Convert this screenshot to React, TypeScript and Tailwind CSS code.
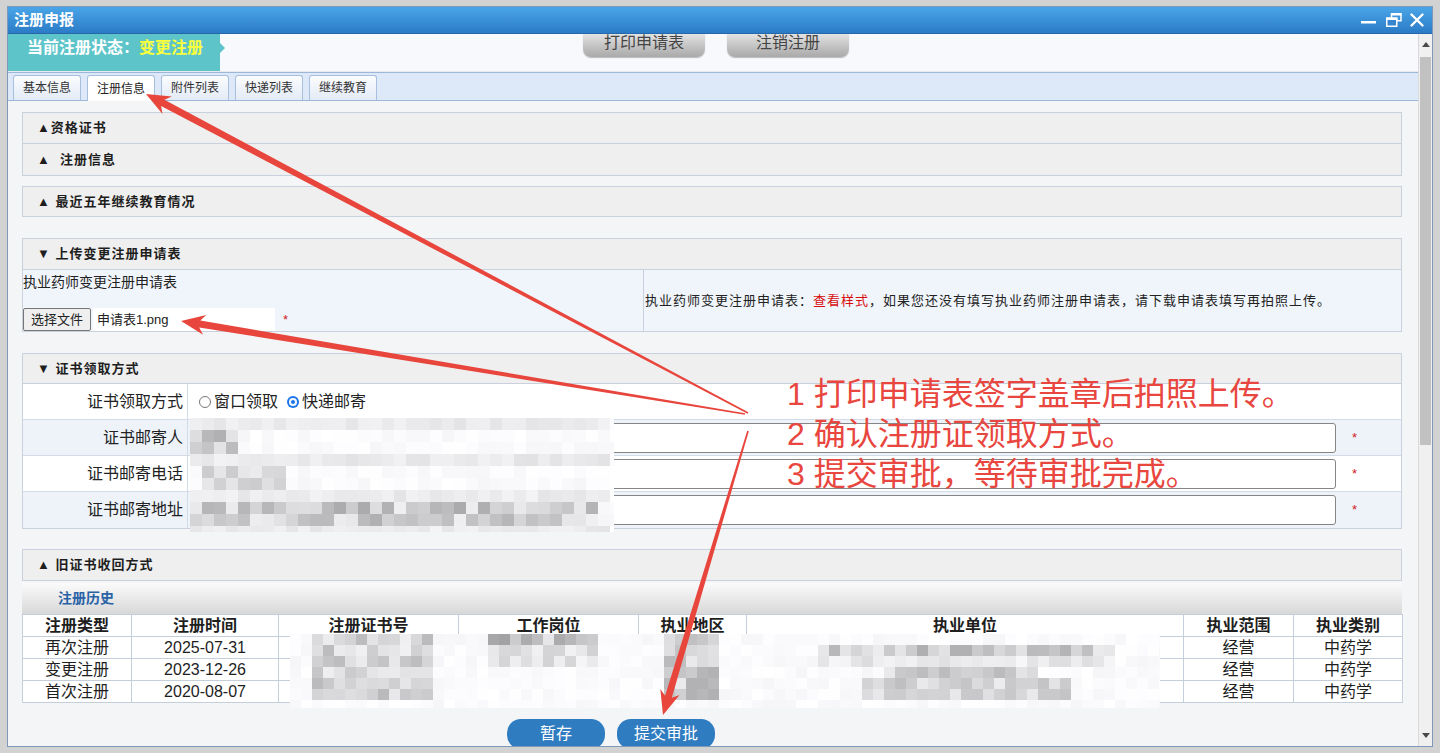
import React from "react";

type Ink = { x: number; y: number; w: number; h: number; g: number; r: number };

// 伪随机灰度，用来画打码块
const noise = (i: number, j: number, seed: number) => {
  const v = Math.sin(i * 12.9898 + j * 78.233 + seed * 4.1414) * 43758.5453;
  return v - Math.floor(v);
};

function Mosaic({
  width,
  height,
  inks,
  seed,
  cell = 12,
}: {
  width: number;
  height: number;
  inks: Ink[];
  seed: number;
  cell?: number;
}) {
  const cols = Math.ceil(width / cell);
  const rows = Math.ceil(height / cell);
  const cells: React.ReactNode[] = [];
  for (let r = 0; r < rows; r++) {
    for (let c = 0; c < cols; c++) {
      const cx = c * cell + cell / 2;
      const cy = r * cell + cell / 2;
      const ink = inks.find((k) => cx >= k.x && cx <= k.x + k.w && cy >= k.y && cy <= k.y + k.h);
      const n = noise(r, c, seed);
      const g = ink ? Math.round(ink.g + n * ink.r) : Math.round(246 + n * 9);
      const b = Math.min(255, g + 2);
      cells.push(<div key={`${r}-${c}`} style={{ background: `rgb(${g},${g},${b})` }} />);
    }
  }
  return (
    <div
      className="grid overflow-hidden blur-[0.6px]"
      style={{ width, height, gridTemplateColumns: `repeat(${cols}, ${cell}px)`, gridAutoRows: `${cell}px` }}
    >
      {cells}
    </div>
  );
}

// 红色标注箭头（尾细头粗）
function arrowPoints(x1: number, y1: number, x2: number, y2: number) {
  const dx = x2 - x1;
  const dy = y2 - y1;
  const len = Math.hypot(dx, dy);
  const ux = dx / len;
  const uy = dy / len;
  const nx = -uy;
  const ny = ux;
  const headL = 24;
  const headW = 10;
  const neckW = 3.5;
  const tailW = 0.8;
  const bx = x2 - ux * headL;
  const by = y2 - uy * headL;
  const bx2 = x2 - ux * (headL - 5);
  const by2 = y2 - uy * (headL - 5);
  const p = (x: number, y: number) => `${x.toFixed(1)},${y.toFixed(1)}`;
  return [
    p(x1 + nx * tailW, y1 + ny * tailW),
    p(bx2 + nx * neckW, by2 + ny * neckW),
    p(bx + nx * headW, by + ny * headW),
    p(x2, y2),
    p(bx - nx * headW, by - ny * headW),
    p(bx2 - nx * neckW, by2 - ny * neckW),
    p(x1 - nx * tailW, y1 - ny * tailW),
  ].join(" ");
}

const TitleBar = () => (
  <div className="relative z-10 flex h-[27px] shrink-0 items-center justify-between border-b border-[#2567a8] bg-gradient-to-b from-[#4aa5e8] to-[#2b7bc6] pl-[6px] pr-[8px]">
    <span className="text-[15px] font-bold text-white">注册申报</span>
    <div className="flex items-center">
      <svg width="15" height="14" viewBox="0 0 15 14">
        <rect x="0" y="8" width="15" height="2.5" fill="#fff" />
      </svg>
      <svg width="16" height="14" viewBox="0 0 16 14" className="ml-[10px]">
        <rect x="5.5" y="0.75" width="9.5" height="7" fill="none" stroke="#fff" strokeWidth="1.5" />
        <rect x="5.5" y="0" width="10" height="2.5" fill="#fff" />
        <rect x="0.75" y="5.25" width="10" height="8" fill="#3585cf" stroke="#fff" strokeWidth="1.5" />
        <rect x="0" y="4.5" width="11.5" height="2.5" fill="#fff" />
      </svg>
      <svg width="14" height="14" viewBox="0 0 14 14" className="ml-[8px]">
        <path d="M1.5 1.5 L12.5 12.5 M12.5 1.5 L1.5 12.5" stroke="#fff" strokeWidth="2.4" strokeLinecap="round" />
      </svg>
    </div>
  </div>
);

const StatusBar = () => (
  <div className="flex h-[38px] shrink-0 items-start border-b border-[#e8eaee] bg-[#f7f9fc]">
    <div className="h-full w-[212px] bg-[#5dc4c9] pl-[19px] pt-[3px] text-[16px] font-bold leading-[22px] text-white">
      当前注册状态：<span className="text-[#fbff3c]">变更注册</span>
    </div>
    <div className="mt-[9px] h-0 w-0 border-y-[5px] border-l-[5px] border-y-transparent border-l-[#5dc4c9]" />
    <div className="-mt-[6px] ml-[358px] flex gap-[22px]">
      {["打印申请表", "注销注册"].map((t) => (
        <div
          key={t}
          className="flex h-[29px] w-[122px] items-center justify-center rounded-b-[8px] bg-gradient-to-b from-[#f2f2f2] to-[#a9a9a9] text-[16px] text-[#454545] shadow-[0_1px_1px_rgba(0,0,0,0.25)]"
        >
          {t}
        </div>
      ))}
    </div>
  </div>
);

const tabs = ["基本信息", "注册信息", "附件列表", "快递列表", "继续教育"];

const Tabs = () => (
  <div className="flex h-[29px] shrink-0 items-end gap-[6px] border-y border-[#9db7d9] bg-[#dde9f9] pl-[5px]">
    {tabs.map((t) => (
      <div
        key={t}
        className={
          t === "注册信息"
            ? "-mb-px flex h-[26px] w-[68px] items-center justify-center rounded-t-[3px] border border-b-0 border-[#a7bfdc] bg-white text-[12px] text-[#222]"
            : "flex h-[25px] w-[68px] items-center justify-center rounded-t-[3px] border border-b-0 border-[#a7bfdc] bg-gradient-to-b from-[#fbfcfe] to-[#e3ebf6] text-[12px] text-[#333]"
        }
      >
        {t}
      </div>
    ))}
  </div>
);

function SectionHead({ children, className = "" }: { children: React.ReactNode; className?: string }) {
  return (
    <div
      className={`flex items-center whitespace-pre border border-[#c8d1dd] bg-[#efefef] pl-[14px] text-[13px] font-bold tracking-[1px] text-[#1e1e1e] ${className}`}
    >
      {children}
    </div>
  );
}

const Radio = ({ checked }: { checked?: boolean }) =>
  checked ? (
    <span className="mr-[3px] inline-flex h-[12px] w-[12px] items-center justify-center rounded-full bg-[#1a73e8]">
      <span className="h-[6px] w-[6px] rounded-full border border-white bg-[#1a73e8] ring-1 ring-white" />
    </span>
  ) : (
    <span className="mr-[3px] inline-block h-[12px] w-[12px] rounded-full border border-[#767676] bg-white" />
  );

const pickupRows = [
  { label: "证书邮寄人", bg: "bg-[#eef3fa]" },
  { label: "证书邮寄电话", bg: "bg-white" },
  { label: "证书邮寄地址", bg: "bg-[#eef3fa]" },
];

const PickupSection = () => (
  <div className="relative border border-t-0 border-[#c8d1dd]">
    <div className="flex h-[36px] border-b border-[#d3dbe6] bg-white">
      <div className="flex w-[165px] items-center justify-end border-r border-[#d3dbe6] pr-[4px] text-[16px]">
        证书领取方式
      </div>
      <div className="ml-[11px] flex items-center text-[16px]">
        <Radio />
        窗口领取
        <span className="ml-[9px] flex items-center">
          <Radio checked />
          快递邮寄
        </span>
      </div>
    </div>
    {pickupRows.map((r, i) => (
      <div
        key={r.label}
        className={`flex h-[36px] items-center ${i < 2 ? "border-b border-[#d3dbe6]" : ""} ${r.bg}`}
      >
        <div className="flex h-full w-[165px] items-center justify-end border-r border-[#d3dbe6] pr-[4px] text-[16px]">
          {r.label}
        </div>
        <div className="ml-[2px] h-[30px] w-[1146px] rounded-[3px] border border-[#858585] bg-white" />
        <span className="ml-[16px] text-[13px] text-[#d21c1c]">*</span>
      </div>
    ))}
    <div className="absolute left-[167px] top-[34px]">
      <Mosaic
        width={424}
        height={114}
        seed={3}
        inks={[
          { x: 0, y: 0, w: 424, h: 7, g: 228, r: 14 },
          { x: 0, y: 7, w: 52, h: 24, g: 170, r: 60 },
          { x: 0, y: 31, w: 424, h: 11, g: 226, r: 16 },
          { x: 12, y: 42, w: 86, h: 25, g: 200, r: 45 },
          { x: 0, y: 67, w: 424, h: 12, g: 228, r: 16 },
          { x: 0, y: 79, w: 410, h: 25, g: 170, r: 70 },
          { x: 0, y: 104, w: 424, h: 10, g: 228, r: 16 },
        ]}
      />
    </div>
  </div>
);

const cols = [109, 147, 180, 180, 108, 437, 110, 109];
const heads = ["注册类型", "注册时间", "注册证书号", "工作岗位", "执业地区", "执业单位", "执业范围", "执业类别"];
const history = [
  ["再次注册", "2025-07-31"],
  ["变更注册", "2023-12-26"],
  ["首次注册", "2020-08-07"],
];

const HistoryTable = () => (
  <div className="relative">
    <table className="w-full table-fixed border-collapse bg-white text-[16px] text-[#1e1e1e]">
      <colgroup>
        {cols.map((w, i) => (
          <col key={i} style={{ width: w }} />
        ))}
      </colgroup>
      <thead>
        <tr className="h-[22px]">
          {heads.map((h) => (
            <th key={h} className="border border-[#c5cedb] p-0 font-bold leading-[20px]">
              {h}
            </th>
          ))}
        </tr>
      </thead>
      <tbody>
        {history.map(([type, date]) => (
          <tr key={date} className="h-[22px]">
            <td className="border border-[#c5cedb] p-0 text-center leading-[20px]">{type}</td>
            <td className="border border-[#c5cedb] p-0 text-center leading-[20px]">{date}</td>
            <td className="border border-[#c5cedb] p-0" />
            <td className="border border-[#c5cedb] p-0" />
            <td className="border border-[#c5cedb] p-0" />
            <td className="border border-[#c5cedb] p-0" />
            <td className="border border-[#c5cedb] p-0 text-center leading-[20px]">经营</td>
            <td className="border border-[#c5cedb] p-0 text-center leading-[20px]">中药学</td>
          </tr>
        ))}
      </tbody>
    </table>
    <div className="absolute left-[268px] top-[20px]">
      <Mosaic
        width={870}
        height={74}
        seed={7}
        cell={11}
        inks={[
          { x: 22, y: 2, w: 120, h: 64, g: 185, r: 55 },
          { x: 201, y: 2, w: 108, h: 14, g: 160, r: 70 },
          { x: 201, y: 16, w: 108, h: 14, g: 210, r: 35 },
          { x: 371, y: 2, w: 59, h: 64, g: 175, r: 60 },
          { x: 526, y: 6, w: 300, h: 12, g: 170, r: 70 },
          { x: 526, y: 18, w: 300, h: 10, g: 220, r: 28 },
          { x: 598, y: 28, w: 150, h: 16, g: 175, r: 65 },
          { x: 575, y: 44, w: 202, h: 22, g: 190, r: 50 },
        ]}
      />
    </div>
  </div>
);

const ScrollBar = () => (
  <div className="flex w-[14px] shrink-0 flex-col items-center border-l border-[#d9d9d9] bg-[#f0f0f0]">
    <div className="mt-[8px] h-0 w-0 border-x-[4px] border-b-[5px] border-x-transparent border-b-[#4a4a4a]" />
    <div className="mt-[10px] h-[388px] w-[11px] bg-[#c1c1c1]" />
    <div className="mb-[8px] mt-auto h-0 w-0 border-x-[4px] border-t-[5px] border-x-transparent border-t-[#4a4a4a]" />
  </div>
);

export default function App() {
  return (
    <div className="relative h-[753px] w-[1440px] overflow-hidden bg-[#d2d2d2] font-['Liberation_Sans','Noto_Sans_CJK_SC',sans-serif] text-[#222]">
      <div className="ml-[7px] mt-[6px] flex h-[741px] w-[1426px] flex-col overflow-hidden border border-[#7d98b8] bg-[#f4f5f7]">
        <TitleBar />
        <div className="flex min-h-0 flex-1">
          <div className="flex min-w-0 flex-1 flex-col">
            <StatusBar />
            <Tabs />
            <div className="min-h-0 flex-1 overflow-hidden pl-[14px] pr-[16px] pt-[11px]">
              <SectionHead className="h-[32px]">▲资格证书</SectionHead>
              <SectionHead className="h-[32px] border-t-0">▲  注册信息</SectionHead>
              <SectionHead className="mt-[10px] h-[31px]">▲ 最近五年继续教育情况</SectionHead>

              {/* 上传申请表 */}
              <SectionHead className="mt-[21px] h-[32px]">▼ 上传变更注册申请表</SectionHead>
              <div className="flex h-[62px] border border-t-0 border-[#c8d1dd] bg-[#f0f5fb]">
                <div className="flex w-[621px] flex-col justify-between border-r border-[#c8d1dd] pt-[3px] text-[14px]">
                  <div className="leading-[18px]">执业药师变更注册申请表</div>
                  <div className="flex items-center">
                    <div className="flex h-[23px] w-[68px] items-center justify-center rounded-[2px] border border-[#767676] bg-[#efefef] text-[13px]">
                      选择文件
                    </div>
                    <div className="ml-[2px] flex h-[23px] w-[182px] items-center bg-white px-[4px] text-[13px]">
                      申请表1.png
                    </div>
                    <span className="ml-[8px] text-[13px] text-[#d21c1c]">*</span>
                  </div>
                </div>
                <div className="flex flex-1 items-center pl-px text-[13px] tracking-[1px]">
                  执业药师变更注册申请表：<span className="text-[#d80c0c]">查看样式</span>，如果您还没有填写执业药师注册申请表，请下载申请表填写再拍照上传。
                </div>
              </div>

              {/* 证书领取方式 */}
              <SectionHead className="mt-[21px] h-[31px]">▼ 证书领取方式</SectionHead>
              <PickupSection />

              {/* 旧证书收回 + 注册历史 */}
              <SectionHead className="mt-[20px] h-[32px]">▲ 旧证书收回方式</SectionHead>
              <div className="mt-[2px] flex h-[31px] items-center bg-gradient-to-b from-[#fbfbfb] to-[#d8d8d8] pl-[36px] text-[14px] font-bold text-[#2a62a6]">
                注册历史
              </div>
              <HistoryTable />

              <div className="mt-[16px] flex gap-[12px] pl-[485px]">
                {["暂存", "提交审批"].map((t) => (
                  <div
                    key={t}
                    className="flex h-[30px] w-[98px] items-center justify-center rounded-[14px] bg-[#2f7cc1] text-[16px] text-white"
                  >
                    {t}
                  </div>
                ))}
              </div>
            </div>
          </div>
          <ScrollBar />
        </div>
      </div>

      {/* 操作说明标注 */}
      <svg className="pointer-events-none absolute left-0 top-0" width="1440" height="753">
        <polygon points={arrowPoints(748, 413, 146, 94)} fill="#e8453c" />
        <polygon points={arrowPoints(745, 414, 181, 321)} fill="#e8453c" />
        <polygon points={arrowPoints(748, 431, 663, 715)} fill="#e8453c" />
      </svg>
      <div className="pointer-events-none absolute left-[787px] top-[374px] whitespace-pre text-[32px] leading-[40px] text-[#e8463e]">
        <div>1 打印申请表签字盖章后拍照上传。</div>
        <div>2 确认注册证领取方式。</div>
        <div>3 提交审批，等待审批完成。</div>
      </div>
    </div>
  );
}
